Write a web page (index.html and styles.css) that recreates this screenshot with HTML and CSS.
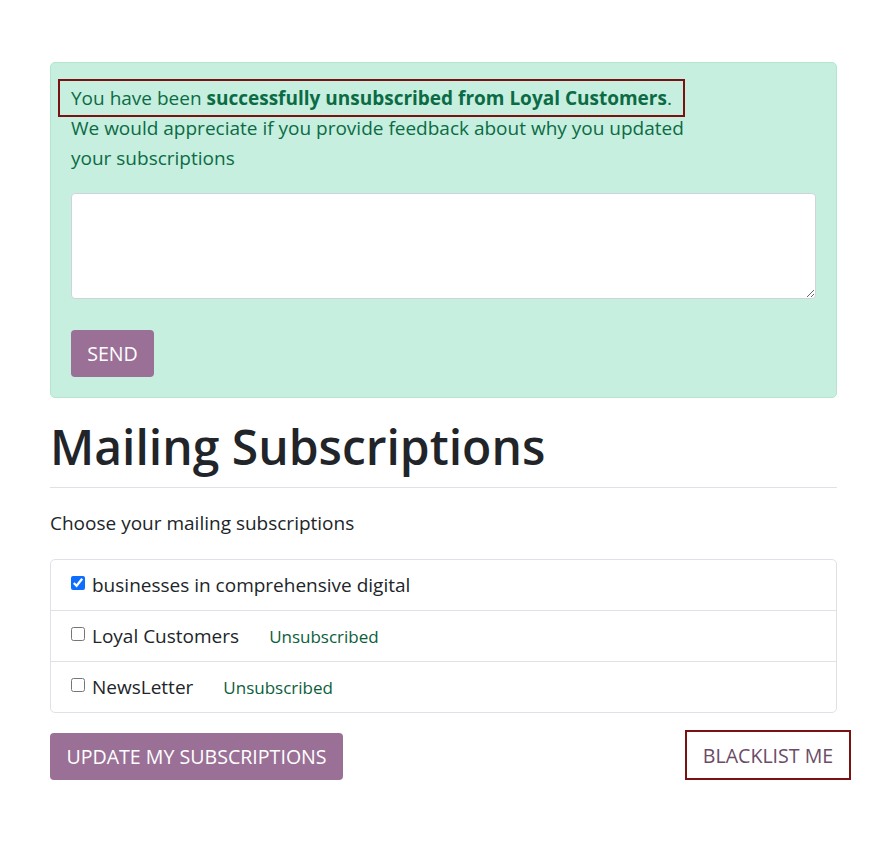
FILE: index.html
```html
<!DOCTYPE html>
<html>
<head>
<meta charset="utf-8">
<link rel="stylesheet" href="styles.css">
</head>
<body>
<div class="page">
  <div class="alert">
    <div class="msg">
      <span class="hl">You have been <b>successfully unsubscribed from Loyal Customers</b>.</span>
      <p class="ask">We would appreciate if you provide feedback about why you updated your subscriptions</p>
    </div>
    <textarea class="feedback"></textarea>
    <button class="btn btn-primary send">SEND</button>
  </div>

  <h1 class="title">Mailing Subscriptions</h1>
  <p class="lead">Choose your mailing subscriptions</p>

  <ul class="list">
    <li class="item"><input type="checkbox" checked><span class="name">businesses in comprehensive digital</span></li>
    <li class="item"><input type="checkbox"><span class="name">Loyal Customers</span><span class="status">Unsubscribed</span></li>
    <li class="item"><input type="checkbox"><span class="name">NewsLetter</span><span class="status">Unsubscribed</span></li>
  </ul>

  <div class="actions">
    <button class="btn btn-primary update">UPDATE MY SUBSCRIPTIONS</button>
    <button class="btn btn-link blacklist">BLACKLIST ME</button>
  </div>
</div>
</body>
</html>
```

FILE: styles.css
```css
* { box-sizing: border-box; }
html, body { margin: 0; padding: 0; background: #fff; }
body {
  font-family: "Open Sans", "Noto Sans", sans-serif;
  font-size: 19px;
  color: #212529;
}
.page {
  width: 787px;
  margin: 62px 0 0 50px;
  padding-bottom: 60px;
}
.alert {
  background: #c6efdf;
  border: 1px solid #b3e5cf;
  border-radius: 5px;
  padding: 20px 20px 20px 20px;
  color: #0c6b45;
}
.msg { line-height: 30px; max-width: 640px; }
.hl {
  display: inline-block;
  padding: 2px 11px;
  margin: -2px -11px;
  outline: 2px solid #7b1212;
}
.hl b { font-weight: 700; }
.ask { margin: 0; }
.feedback {
  display: block;
  width: 100%;
  height: 106px;
  margin-top: 20px;
  border: 1px solid #ced4da;
  border-radius: 4px;
  background: #fff;
  resize: vertical;
}
.btn {
  font-family: inherit;
  font-size: 19.6px;
  border: none;
  border-radius: 4px;
  height: 47px;
  padding: 0 16px;
  cursor: pointer;
}
.btn-primary {
  background: #9a7096;
  color: #fff;
}
.send { margin-top: 31px; width: 83px; padding: 0; }
.title {
  margin: 19px 0 0 0;
  font-size: 48px;
  font-weight: 600;
  line-height: 60px;
  color: #212529;
  padding-bottom: 10px;
  border-bottom: 1px solid #dee2e6;
}
.lead {
  margin: 22px 0 22px 0;
  line-height: 27px;
  color: #212529;
}
.list {
  list-style: none;
  margin: 0;
  padding: 0;
  border: 1px solid #dee2e6;
  border-radius: 5px;
}
.item {
  display: flex;
  align-items: center;
  height: 51px;
  padding: 0 20px;
  border-top: 1px solid #dee2e6;
}
.item:first-child { border-top: none; height: 50px; }
.item input {
  width: 14px; height: 14px;
  margin: 0 7px 0 0;
  accent-color: #0d6efd;
  position: relative;
  top: -2px;
}
.status {
  margin-left: 30px;
  font-size: 17px;
  color: #0b5e3c;
}
.actions {
  display: flex;
  justify-content: space-between;
  align-items: flex-start;
  margin-top: 20px;
}
.update { width: 293px; padding: 0; }
.blacklist {
  background: transparent;
  color: #6b4c67;
  border-radius: 0;
  outline: 2px solid #7b1212;
  outline-offset: 0;
  margin-right: -12px;
  margin-top: -1px;
  width: 162px;
  height: 46px;
  padding: 0;
}
```
